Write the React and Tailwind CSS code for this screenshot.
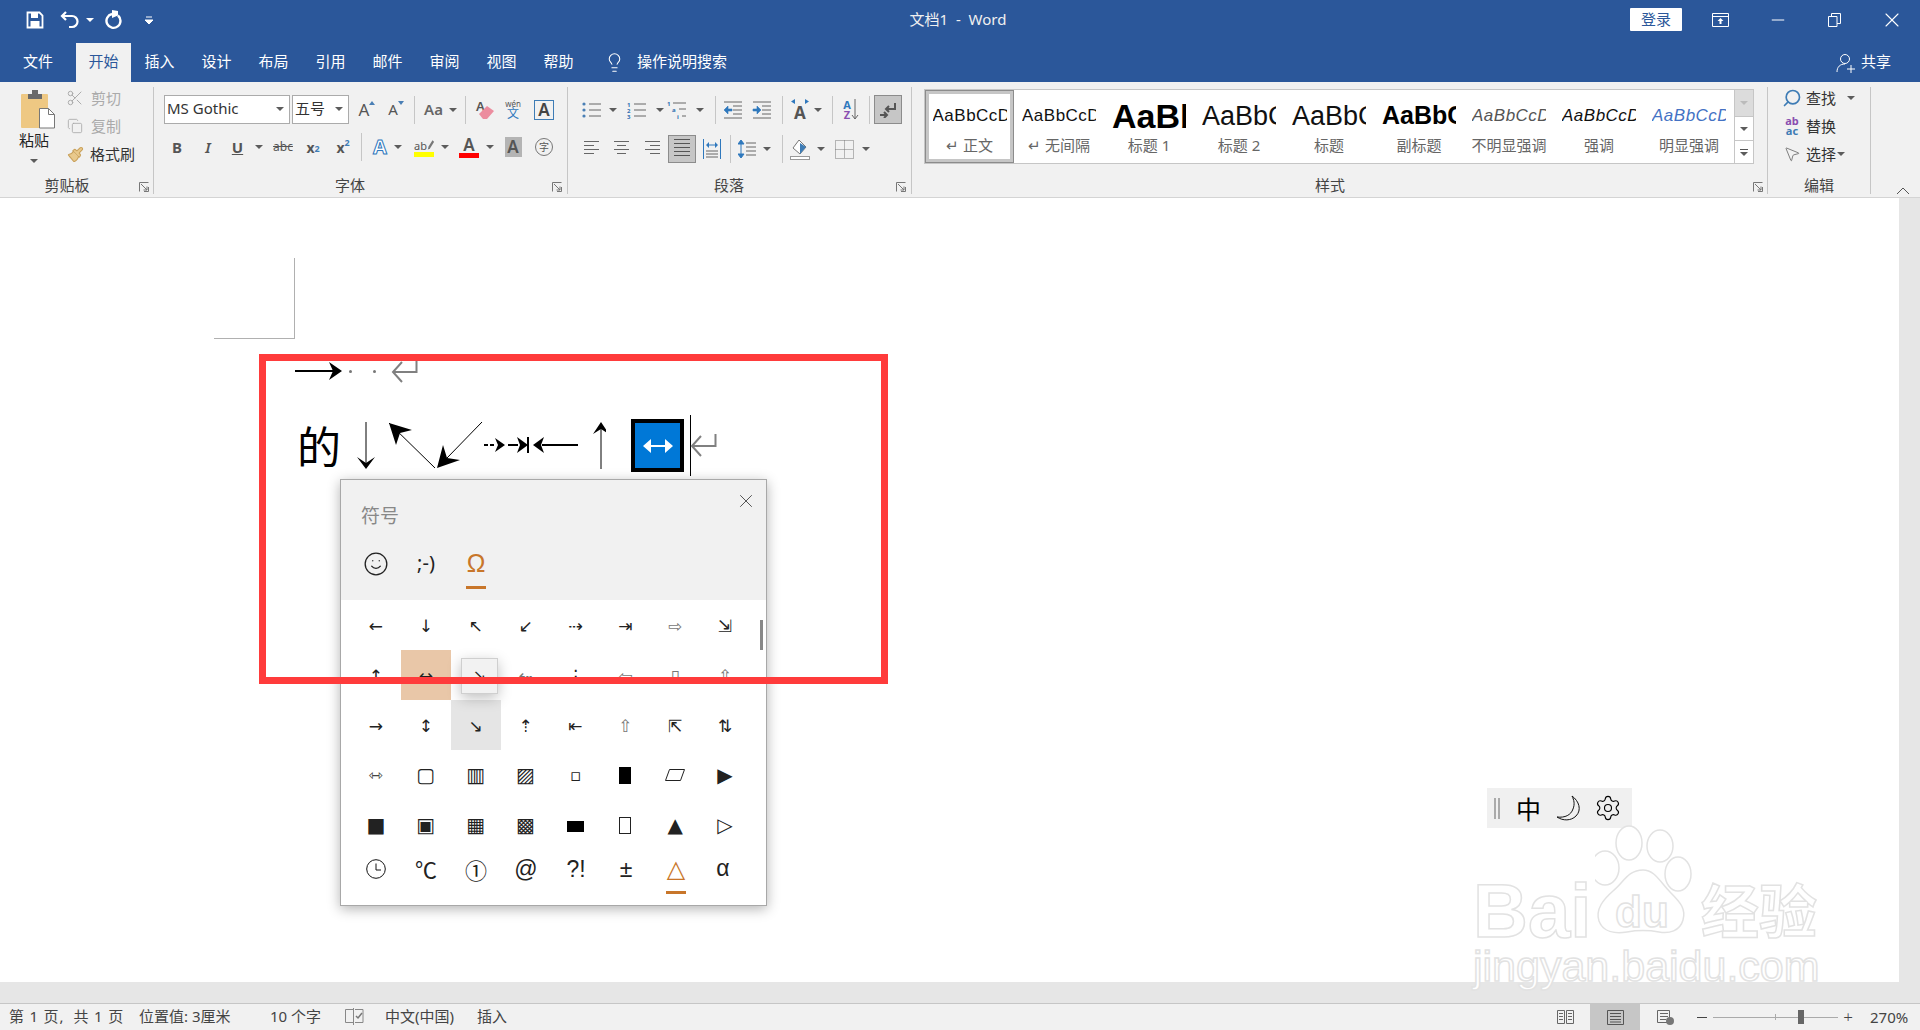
import React from "react";
import { Search, MousePointer2, Scissors, Copy, Paintbrush, Lightbulb, Settings, X, Minus, Smile } from "lucide-react";

const Caret = ({ color = "#5c5c5c" }) => (
  <svg width="8" height="4" viewBox="0 0 8 4" className="shrink-0">
    <path d="M0 0h8L4 4z" fill={color} />
  </svg>
);

const Slot = ({ className = "", children }) => (
  <div className={"flex items-center justify-center shrink-0 h-full " + className}>{children}</div>
);

const Sep = ({ className = "" }) => <div className={"w-px h-[28px] bg-[#c6c6c6] shrink-0 " + className} />;

const Launcher = () => (
  <svg width="10" height="10" viewBox="0 0 10 10">
    <path d="M.5 9.500v-9h9M2 2l6 6M8 4.500V8H4.500M9.500 5v4.500H5" fill="none" stroke="#777" />
  </svg>
);

const Group = ({ className = "", label, launcher, children }) => (
  <div className={"h-[107px] mt-[5px] border-r border-[#c6c6c6] flex flex-col shrink-0 " + className}>
    <div className="flex-1 min-h-0">{children}</div>
    <div className="flex h-[14px] items-center">
      <div className="flex-1 text-center text-[15px] leading-[14px] pb-[4px] text-[#444]">{label}</div>
      {launcher && <div className={"flex justify-center " + launcher}><Launcher /></div>}
    </div>
  </div>
);

const Lines = ({ rows, w = 16, color = "#666", aligns }) => (
  <svg width={w} height={rows * 4 + 1}>
    {Array.from({ length: rows }).map((_, i) => {
      const x = aligns ? aligns[i] : [0, 0];
      return <rect key={i} x={x[0]} y={i * 4} width={w - x[0] - x[1]} height="1" fill={color} />;
    })}
  </svg>
);

const Paste = () => (
  <svg width="36" height="40" viewBox="0 0 36 40">
    <rect x="1" y="5" width="27" height="34" rx="1" fill="#eec883" />
    <path d="M8 5h4V1h6v4h4v5H8z" fill="#6a6a6a" />
    <path d="M19.500 19.500h9l6 6v13.500h-15z" fill="#fff" stroke="#777" />
    <path d="M28.500 19.500v6h6" fill="none" stroke="#777" />
  </svg>
);

const Bullets = () => (
  <svg width="20" height="18" viewBox="0 0 20 18">
    <circle cx="2" cy="3" r="1.600" fill="#4a7fb5" />
    <circle cx="2" cy="9" r="1.600" fill="#4a7fb5" />
    <circle cx="2" cy="15" r="1.600" fill="#4a7fb5" />
    <path d="M7 3h12M7 9h12M7 15h12" stroke="#666" />
  </svg>
);

const Numbered = () => (
  <svg width="20" height="18" viewBox="0 0 20 18">
    <text x="0" y="6" fontSize="6" fontWeight="700" fill="#2f6fb0">1</text>
    <text x="0" y="12" fontSize="6" fontWeight="700" fill="#2f6fb0">2</text>
    <text x="0" y="18" fontSize="6" fontWeight="700" fill="#2f6fb0">3</text>
    <path d="M7 3h12M7 9h12M7 15h12" stroke="#666" />
  </svg>
);

const MultiLevel = () => (
  <svg width="20" height="20" viewBox="0 0 20 20">
    <text x="0" y="6" fontSize="6" fontWeight="700" fill="#2f6fb0">1</text>
    <text x="5" y="12" fontSize="6" fontWeight="700" fill="#2f6fb0">a</text>
    <text x="10" y="19" fontSize="6" fontWeight="700" fill="#2f6fb0">i</text>
    <path d="M6 3h13M12 9h7M15 16h4" stroke="#666" />
  </svg>
);

const Indent = ({ flip }) => (
  <svg width="20" height="18" viewBox="0 0 20 18">
    <path d="M1 1h18M10 5h9M10 9h9M10 13h9M1 17h18" stroke="#666" />
    {flip ? (
      <path d="M1 9l4-4v3h4v2H5v3z" fill="#2f78bd" stroke="#2f78bd" strokeWidth=".6" />
    ) : (
      <path d="M9 9L5 5v3H1v2h4v3z" fill="#2f78bd" stroke="#2f78bd" strokeWidth=".6" />
    )}
  </svg>
);

const Marks = () => (
  <svg width="18" height="16" viewBox="0 0 18 16">
    <path d="M16 1v6H7M10 4L7 7l3 3" fill="none" stroke="#555" strokeWidth="2" />
    <path d="M1 13h7M5 10l3 3-3 3" fill="none" stroke="#555" strokeWidth="2" />
  </svg>
);

const ReturnMark = ({ className = "" }) => (
  <svg width="27" height="23" viewBox="0 0 27 23" className={className}>
    <path d="M25.500 0v12H2M11 2L2 12l9 10" fill="none" stroke="#808080" strokeWidth="2" />
  </svg>
);

const styles = [
  { name: "↵ 正文", text: "AaBbCcDc", cls: "text-[17px] tracking-[.5px]" },
  { name: "↵ 无间隔", text: "AaBbCcDc", cls: "text-[17px] tracking-[.5px]" },
  { name: "标题 1", text: "AaBbCc", cls: "text-[34px] font-bold text-black" },
  { name: "标题 2", text: "AaBbCc", cls: "text-[27px]" },
  { name: "标题", text: "AaBbCc", cls: "text-[27px]" },
  { name: "副标题", text: "AaBbCc", cls: "text-[25px] font-bold text-black" },
  { name: "不明显强调", text: "AaBbCcDd", cls: "text-[17px] tracking-[.5px] italic text-[#555]" },
  { name: "强调", text: "AaBbCcDd", cls: "text-[17px] tracking-[.5px] italic" },
  { name: "明显强调", text: "AaBbCcDd", cls: "text-[17px] tracking-[.5px] italic text-[#4472c4]" },
];

const tabs = ["插入", "设计", "布局", "引用", "邮件", "审阅", "视图", "帮助"];

const G = "text-[#777] pt-[2px]";
const P = "pt-[2px]";
const Box = ({ className }) => <span className={"block shrink-0 " + className} />;
const symbolRows = [
  [["←", P], ["↓", P], ["↖", P], ["↙", P], ["⇢", P], ["⇥", P], ["⇨", G], ["⇲", P]],
  [["↑", P], ["↔", "bg-[#e9c7a8] " + P], [""], ["⇠", G], ["⋮", P], ["⇦", G], ["▯", G], ["⇧", G]],
  [["→", P], ["↕", P], ["↘", "bg-[#e5e5e5] " + P], ["⇡", P], ["⇤", P], ["⇧", G], ["⇱", P], ["⇅", P]],
  [
    ["⇿", "text-[#444]"], ["▢", "text-[20px]"], ["▥", "text-[20px]"], ["▨", "text-[20px]"], ["▫", "text-[12px]"],
    [<Box className="w-[12px] h-[17px] bg-black" />],
    [<svg width="20" height="12" viewBox="0 0 20 12"><path d="M4.500.5h15L15.500 11.500H.5z" fill="none" stroke="#222" /></svg>],
    ["▶", "text-[20px]"],
  ],
  [
    ["■", "text-[20px]"], ["▣", "text-[20px]"], ["▦", "text-[20px]"], ["▩", "text-[20px]"],
    [<Box className="w-[17px] h-[11px] bg-black mt-[2px]" />],
    [<Box className="w-[12px] h-[17px] border border-[#222]" />],
    ["▲", "text-[20px]"], ["▷", "text-[20px]"],
  ],
];

const SymbolPopup = () => (
  <div className="absolute left-[340px] top-[479px] w-[427px] h-[427px] bg-white border border-[#a8a8a8] shadow-[0_3px_12px_rgba(0,0,0,.3)]">
    <div className="h-[120px] bg-[#f1f1f1] relative">
      <div className="pl-[20px] pt-[23px] text-[19px] leading-[26px] text-[#888]">符号</div>
      <X size={22} strokeWidth={0.9} color="#333" className="absolute right-[9px] top-[10px]" />
      <div className="flex mt-[22px] pl-[10px] h-[40px]">
        <div className="w-[50px] flex justify-center">
          <Smile size={26} strokeWidth={1.2} color="#222" />
        </div>
        <div className="w-[50px] text-center text-[20px] leading-[24px] text-[#222]">;-)</div>
        <div className="w-[50px] flex flex-col items-center">
          <span className="text-[25px] leading-[24px] text-[#c8762a] font-['Liberation_Sans',sans-serif]">Ω</span>
          <span className="w-[20px] h-[3px] bg-[#c8762a] mt-[11px]" />
        </div>
      </div>
    </div>
    <div className="relative pl-[10px] pr-[16px] font-['DejaVu_Sans',sans-serif]">
      {symbolRows.map((row, r) => (
        <div key={r} className="flex">
          {row.map((s, c) => (
            <div key={c} className={"w-[50px] h-[50px] flex items-center justify-center text-[17px] leading-none text-[#222] " + (s[1] || "")}>
              {s[0]}
            </div>
          ))}
        </div>
      ))}
      <div className="flex h-[50px] text-[#222] font-['Liberation_Sans',sans-serif]">
        <div className="w-[50px] flex justify-center pt-[9px]">
          <svg width="20" height="20" viewBox="0 0 20 20">
            <circle cx="10" cy="10" r="9.300" fill="none" stroke="#111" />
            <path d="M10 4.500V11h5" fill="none" stroke="#111" />
          </svg>
        </div>
        <div className="w-[50px] text-center text-[22px] leading-[36px] font-['Noto_Sans_CJK_SC',sans-serif]">℃</div>
        <div className="w-[50px] text-center text-[22px] leading-[38px] font-['Noto_Sans_CJK_SC',sans-serif]">①</div>
        <div className="w-[50px] text-center text-[23px] leading-[38px]">@</div>
        <div className="w-[50px] text-center text-[23px] leading-[38px]">?!</div>
        <div className="w-[50px] text-center text-[23px] leading-[38px]">±</div>
        <div className="w-[50px] flex flex-col items-center">
          <span className="text-[24px] leading-[38px] text-[#c8762a] font-['DejaVu_Sans',sans-serif]">△</span>
          <span className="w-[20px] h-[3px] bg-[#c8762a] mt-[3px]" />
        </div>
        <div className="w-[50px] text-center text-[23px] leading-[36px] -ml-[3px]">α</div>
      </div>
      <div className="absolute right-[3px] top-[20px] w-[3px] h-[30px] bg-[#888]" />
      <div className="absolute left-[120px] top-[58px] w-[37px] h-[36px] bg-[#f2f2f2] border border-[#cfcfcf] shadow-[0_4px_14px_rgba(0,0,0,.25)] flex items-center justify-center text-[16px] text-[#222]">
        ↘
      </div>
    </div>
  </div>
);

const Watermark = () => (
  <div className="absolute left-[1473px] top-[824px] w-[346px] h-[166px] pointer-events-none flex flex-col text-white [-webkit-text-stroke:1.5px_#e2e2e2]">
    <div className="flex h-[114px] items-end font-['Liberation_Sans',sans-serif] font-bold">
      <span className="text-[76px] leading-[54px] w-[122px]">Bai</span>
      <div className="relative w-[98px] h-[114px] shrink-0">
        <svg width="98" height="114" viewBox="0 0 98 114">
          <g fill="#fff" stroke="#e2e2e2" strokeWidth="1.500">
            <ellipse cx="34" cy="19" rx="13" ry="17" />
            <ellipse cx="65" cy="22" rx="13" ry="16" />
            <ellipse cx="10" cy="44" rx="14" ry="17" />
            <ellipse cx="83" cy="50" rx="13" ry="17" />
            <path d="M48 46c12 0 17 12 27 22 11 11 16 17 13 28-3 11-14 14-24 12-11-2-21-2-32 0-12 2-24 0-28-11-4-12 5-22 14-30 11-9 15-21 30-21z" />
          </g>
        </svg>
        <span className="absolute left-[20px] bottom-[5px] text-[44px] leading-[42px]">du</span>
      </div>
      <span className="ml-[8px] text-[58px] leading-[60px] whitespace-nowrap font-['Noto_Sans_CJK_SC',sans-serif]">经验</span>
    </div>
    <div className="text-[43px] leading-[48px] mt-[4px] whitespace-nowrap font-['Liberation_Sans',sans-serif]">jingyan.baidu.com</div>
  </div>
);

export default function App() {
  return (
    <div className="relative w-[1920px] h-[1030px] overflow-hidden flex flex-col bg-white font-['Noto_Sans','Noto_Sans_CJK_SC',sans-serif]">
      {/* title bar */}
      <div className="h-[43px] bg-[#2b579a] flex text-white shrink-0">
        <div className="w-[860px] flex h-[40px] items-center pl-[26px]">
          <svg width="18" height="18" viewBox="0 0 18 18">
            <path d="M1.500 1.500h12l3 3v12h-15z" fill="none" stroke="#fff" strokeWidth="1.800" />
            <rect x="5" y="2" width="7" height="5" fill="#fff" />
            <rect x="4.500" y="10" width="9" height="6" fill="#fff" />
          </svg>
          <svg width="20" height="18" viewBox="0 0 20 18" className="ml-[16px]">
            <path d="M6 1L2 5l4 4M2.500 5H12a5 5 0 0 1 0 11H9" fill="none" stroke="#fff" strokeWidth="2.200" />
          </svg>
          <div className="ml-[6px]"><Caret color="#fff" /></div>
          <svg width="18" height="20" viewBox="0 0 18 20" className="ml-[11px]">
            <path d="M7 4a7 7 0 1 0 6 1.500" fill="none" stroke="#fff" strokeWidth="2.400" />
            <path d="M7 0v8l6-2.500V1z" fill="#fff" />
          </svg>
          <svg width="8" height="8" viewBox="0 0 8 8" className="ml-[22px]">
            <path d="M1 1h6M0 4h8L4 8z" stroke="#fff" fill="#fff" />
          </svg>
        </div>
        <div className="w-[196px] h-[40px] pb-[2px] flex items-center justify-center text-[15px] whitespace-pre text-[#f0f0f0]">文档1  -  Word</div>
        <div className="flex-1 flex justify-end">
          <div className="mt-[8px] mr-[9px] w-[52px] h-[23px] bg-white rounded-[1px] text-[#2b579a] text-[15px] leading-[22px] text-center">登录</div>
          <Slot className="w-[58px] !h-[40px]">
            <svg width="17" height="14" viewBox="0 0 17 14">
              <path d="M.5.500h16v13H.5zM.5 3.500h16" fill="none" stroke="#fff" />
              <path d="M8.500 5L5.500 8h2v3h2V8h2z" fill="#fff" />
            </svg>
          </Slot>
          <Slot className="w-[57px] !h-[40px]"><Minus size={20} strokeWidth={1.2} /></Slot>
          <Slot className="w-[57px] !h-[40px]">
            <svg width="13" height="14" viewBox="0 0 13 14">
              <path d="M.5 3.500h8.500v10H.5zM3.500 3.500v-3h9v10H9" fill="none" stroke="#fff" />
            </svg>
          </Slot>
          <Slot className="w-[57px] !h-[40px]"><X size={24} strokeWidth={1.1} /></Slot>
        </div>
      </div>

      {/* tabs */}
      <div className="h-[39px] bg-[#2b579a] flex text-white text-[15px] shrink-0">
        <div className="w-[76px] leading-[37px] text-center">文件</div>
        <div className="w-[55px] leading-[37px] text-center bg-[#f1f1f1] text-[#2b579a]">开始</div>
        {tabs.map((t) => (
          <div key={t} className="w-[57px] leading-[37px] text-center">{t}</div>
        ))}
        <Slot className="ml-[14px] w-[26px]"><Lightbulb size={21} strokeWidth={1.2} /></Slot>
        <div className="ml-[10px] leading-[37px]">操作说明搜索</div>
        <div className="flex-1 flex justify-end items-center pr-[29px] pb-[2px]">
          <svg width="20" height="20" viewBox="0 0 20 20" className="mr-[5px] mt-[2px]">
            <circle cx="9" cy="6" r="4.500" fill="none" stroke="#fff" />
            <path d="M1 19c0-5 3-8 8-8M11 16h8M15 12v8" fill="none" stroke="#fff" />
          </svg>
          共享
        </div>
      </div>

      {/* ribbon */}
      <div className="h-[116px] bg-[#f1f1f1] border-b border-[#d4d4d4] flex shrink-0 text-[#444]">
        <Group className="w-[154px]" label="剪贴板" launcher="w-[19px]">
          <div className="flex">
            <div className="w-[63px] flex flex-col items-center pt-[2px] pl-[13px]">
              <Paste />
              <div className="text-[15px] leading-[16px] mt-[3px] -ml-[8px] text-[#222]">粘贴</div>
              <div className="mt-[11px] -ml-[8px]"><Caret /></div>
            </div>
            <div className="flex flex-col gap-[4px] text-[15px] -mt-[1px]">
              <div className="h-[24px] flex items-center text-[#aaa]">
                <Slot className="w-[24px]"><Scissors size={18} strokeWidth={1.3} /></Slot>
                <span className="ml-[4px]">剪切</span>
              </div>
              <div className="h-[24px] flex items-center text-[#aaa]">
                <Slot className="w-[24px]"><Copy size={16} strokeWidth={1.3} /></Slot>
                <span className="ml-[4px]">复制</span>
              </div>
              <div className="h-[24px] flex items-center text-[#333]">
                <Slot className="w-[24px]"><Paintbrush size={17} strokeWidth={1.5} color="#c9a15b" fill="#e9c98c" /></Slot>
                <span className="ml-[3px]">格式刷</span>
              </div>
            </div>
          </div>
        </Group>

        <Group className="w-[414px]" label="字体" launcher="w-[21px]">
          <div className="h-[29px] mt-[8px] flex pl-[10px] items-center">
            <div className="w-[126px] h-[29px] pb-[2px] bg-white border border-[#ababab] flex items-center justify-between pl-[2px] pr-[5px] text-[15px] text-[#333]">
              MS Gothic<Caret />
            </div>
            <div className="w-[57px] h-[29px] pb-[2px] ml-[2px] bg-white border border-[#ababab] flex items-center justify-between pl-[2px] pr-[5px] text-[15px] text-[#333]">
              五号<Caret />
            </div>
            <Slot className="w-[28px] ml-[4px] text-[17px] text-[#555]">
              A<svg width="6" height="4" viewBox="0 0 6 4" className="-mt-[14px]"><path d="M3 0l3 4H0z" fill="#4a7fb5" /></svg>
            </Slot>
            <Slot className="w-[30px] text-[15px] text-[#555]">
              A<svg width="6" height="4" viewBox="0 0 6 4" className="-mt-[14px]"><path d="M3 4l3-4H0z" fill="#4a7fb5" /></svg>
            </Slot>
            <Sep className="ml-[3px]" />
            <Slot className="w-[50px] gap-[6px] pl-[1px] text-[15px] font-semibold text-[#666]">Aa<Caret /></Slot>
            <Sep />
            <Slot className="w-[38px]">
              <svg width="20" height="21" viewBox="0 0 20 21">
                <text x="1" y="12" fontSize="13" fontWeight="600" fill="#555">A</text>
                <path d="M4 15l8-8 7 5-7 8H8z" fill="#ec8d9f" />
              </svg>
            </Slot>
            <Slot className="w-[18px] flex-col leading-none">
              <span className="text-[8px] text-[#555]">wén</span>
              <span className="text-[12px] text-[#2f78bd]">文</span>
            </Slot>
            <Slot className="w-[44px]">
              <div className="w-[20px] h-[20px] border border-[#3e7cb5] text-[17px] leading-[18px] font-semibold text-center text-[#444]">A</div>
            </Slot>
          </div>
          <div className="h-[28px] mt-[9px] flex pl-[8px] items-center text-[#555]">
            <Slot className="w-[30px] font-bold text-[15px]">B</Slot>
            <Slot className="w-[32px] italic font-semibold text-[15px]">I</Slot>
            <Slot className="w-[27px] font-bold text-[15px] underline">U</Slot>
            <Slot className="w-[16px]"><Caret /></Slot>
            <Slot className="w-[32px] text-[12px] line-through">abc</Slot>
            <Slot className="w-[28px] font-bold text-[14px]">x<sub className="text-[9px] text-[#3e7cb5]">2</sub></Slot>
            <Slot className="w-[32px] font-bold text-[14px]">x<sup className="text-[9px] text-[#3e7cb5]">2</sup></Slot>
            <Sep className="ml-[2px]" />
            <Slot className="w-[28px] ml-[4px] text-[20px] font-bold text-white [-webkit-text-stroke:1px_#2f78bd]">A</Slot>
            <Slot className="w-[8px]"><Caret /></Slot>
            <Slot className="w-[36px] ml-[4px] flex-col">
              <span className="flex items-end h-[15px] w-[20px] justify-between">
                <span className="text-[11px] leading-[12px]">ab</span>
                <svg width="9" height="14" viewBox="0 0 9 14"><path d="M7 1L2 9l-1 4 3-2 5-8z" fill="#777" /></svg>
              </span>
              <span className="w-[20px] h-[5px] bg-[#ffff00]" />
            </Slot>
            <Slot className="w-[6px]"><Caret /></Slot>
            <Slot className="w-[34px] ml-[4px] flex-col">
              <span className="text-[17px] leading-[17px] font-semibold">A</span>
              <span className="w-[20px] h-[5px] bg-[#ff0000]" />
            </Slot>
            <Slot className="w-[8px]"><Caret /></Slot>
            <Slot className="w-[38px]">
              <div className="w-[17px] h-[20px] bg-[#b4b4b4] text-[17px] leading-[20px] font-semibold text-center">A</div>
            </Slot>
            <Slot className="w-[24px]">
              <div className="w-[18px] h-[18px] rounded-full border border-[#777] text-[10px] leading-[16px] text-center">字</div>
            </Slot>
          </div>
        </Group>

        <Group className="w-[344px]" label="段落" launcher="w-[21px]">
          <div className="h-[29px] mt-[8px] flex items-center">
            <Slot className="w-[28px] ml-[10px]"><Bullets /></Slot>
            <Slot className="w-[14px]"><Caret /></Slot>
            <Slot className="w-[34px]"><Numbered /></Slot>
            <Slot className="w-[12px]"><Caret /></Slot>
            <Slot className="w-[22px]"><MultiLevel /></Slot>
            <Slot className="w-[24px]"><Caret /></Slot>
            <Sep className="ml-[3px]" />
            <Slot className="w-[34px]"><Indent flip /></Slot>
            <Slot className="w-[24px]"><Indent /></Slot>
            <Sep className="ml-[8px]" />
            <Slot className="w-[26px] ml-[4px] text-[17px] font-bold text-[#555] flex-col leading-none">
              <svg width="20" height="5" viewBox="0 0 20 5"><path d="M5 0L1 2.500 5 5zM15 0l4 2.500-4 2.500z" fill="#2f78bd" /></svg>
              A
            </Slot>
            <Slot className="w-[10px]"><Caret /></Slot>
            <Sep className="ml-[9px]" />
            <Slot className="w-[36px] text-[11px] font-bold leading-[10px]">
              <div className="flex flex-col items-center">
                <span className="text-[#2f78bd]">A</span>
                <span className="text-[#8a4fb0]">Z</span>
              </div>
              <svg width="8" height="21" viewBox="0 0 8 21"><path d="M4 0v20M1 16l3 4 3-4" fill="none" stroke="#666" /></svg>
            </Slot>
            <Sep />
            <Slot className="w-[28px] ml-[4px] bg-[#c6c6c6] border border-[#8c8c8c]"><Marks /></Slot>
          </div>
          <div className="h-[28px] mt-[11px] flex items-center">
            <Slot className="w-[28px] ml-[9px]"><Lines rows={4} w={15} aligns={[[0, 0], [0, 5], [0, 0], [0, 5]]} /></Slot>
            <Slot className="w-[32px]"><Lines rows={4} w={15} aligns={[[0, 0], [3, 3], [0, 0], [3, 3]]} /></Slot>
            <Slot className="w-[30px]"><Lines rows={4} w={15} aligns={[[0, 0], [5, 0], [0, 0], [5, 0]]} /></Slot>
            <Slot className="w-[28px] ml-[1px] bg-[#c6c6c6] border border-[#8c8c8c]"><Lines rows={5} w={16} color="#555" /></Slot>
            <Slot className="w-[32px]">
              <svg width="18" height="20" viewBox="0 0 18 20">
                <path d="M.5 0v20M17.500 0v20M5 6h8" stroke="#2f78bd" fill="none" />
                <path d="M3 6l3-3v6zM15 6l-3-3v6z" fill="#2f78bd" />
                <path d="M3 12h12M3 15h12M3 18h12" stroke="#666" />
              </svg>
            </Slot>
            <Sep className="ml-[2px]" />
            <Slot className="w-[32px]">
              <svg width="18" height="20" viewBox="0 0 18 20">
                <path d="M3 2v16M0 5l3-4 3 4zM0 15l3 4 3-4z" fill="#2f78bd" stroke="#2f78bd" />
                <path d="M8 4h10M8 8h10M8 12h10M8 16h10" stroke="#666" />
              </svg>
            </Slot>
            <Slot className="w-[8px]"><Caret /></Slot>
            <Sep className="ml-[11px]" />
            <Slot className="w-[34px]">
              <svg width="20" height="21" viewBox="0 0 20 21">
                <path d="M9 1l7 7-6 7-7-6z" fill="#fff" stroke="#777" />
                <path d="M10 4l6 4-6 7z" fill="#3e7cb5" />
                <rect x=".5" y="17.500" width="19" height="3" fill="#fff" stroke="#999" />
              </svg>
            </Slot>
            <Slot className="w-[8px]"><Caret /></Slot>
            <Slot className="w-[32px] ml-[3px]">
              <svg width="19" height="19" viewBox="0 0 19 19">
                <path d="M.5.500h18v18H.5zM9.500.5v18M.5 9.500h18" fill="none" stroke="#777" strokeDasharray="1 1" />
              </svg>
            </Slot>
            <Slot className="w-[8px] ml-[2px]"><Caret /></Slot>
          </div>
        </Group>

        <Group className="w-[856px]" label="样式" launcher="w-[19px]">
          <div className="ml-[12px] mt-[2px] w-[830px] h-[75px] bg-white border border-[#c6c6c6] flex">
            {styles.map((s, i) => (
              <div
                key={s.name}
                className={
                  "w-[90px] h-full flex flex-col items-center shrink-0 " +
                  (i === 0 ? "!w-[89px] border-[4px] border-[#c6c6c6] outline outline-1 outline-[#8c8c8c] -outline-offset-1" : "")
                }
              >
                <div className={"w-[74px] overflow-hidden whitespace-nowrap flex items-center text-[#111] font-['Liberation_Sans',sans-serif] " + (i === 0 ? "h-[40px] mt-[2px]" : "h-[40px] mt-[6px]") + " " + s.cls}>
                  {s.text}
                </div>
                <div className="text-[15px] leading-[18px] text-[#666] whitespace-nowrap">{s.name}</div>
              </div>
            ))}
            <div className="flex-1 flex flex-col border-l border-[#c6c6c6]">
              <div className="h-[26px] bg-[#dcdcdc] flex items-center justify-center"><Caret color="#bbb" /></div>
              <div className="h-[24px] border-t border-[#c6c6c6] flex items-center justify-center"><Caret /></div>
              <div className="flex-1 border-t border-[#c6c6c6] flex flex-col items-center justify-center gap-[2px]">
                <span className="w-[8px] h-px bg-[#555]" />
                <Caret />
              </div>
            </div>
          </div>
        </Group>

        <Group className="w-[103px]" label="编辑">
          <div className="flex flex-col gap-[4px] text-[15px] text-[#333] -mt-[1px]">
            <div className="h-[24px] flex items-center pl-[13px]">
              <Slot className="w-[22px] -scale-x-100"><Search size={20} strokeWidth={2} color="#3e7cb5" /></Slot>
              <span className="ml-[3px]">查找</span>
              <div className="ml-[11px]"><Caret /></div>
            </div>
            <div className="h-[24px] flex items-center pl-[13px]">
              <Slot className="w-[22px] flex-col text-[11px] leading-[10px] font-bold">
                <span className="text-[#8a4fb0]">ab</span>
                <span className="text-[#3e7cb5]">ac</span>
              </Slot>
              <span className="ml-[3px]">替换</span>
            </div>
            <div className="h-[24px] flex items-center pl-[13px]">
              <Slot className="w-[22px]"><MousePointer2 size={18} strokeWidth={1.1} color="#666" /></Slot>
              <span className="ml-[3px]">选择</span>
              <div className="ml-[1px]"><Caret /></div>
            </div>
          </div>
        </Group>

        <div className="flex-1 flex items-end justify-end pr-[10px] pb-[2px]">
          <svg width="14" height="8" viewBox="0 0 14 8"><path d="M1 7l6-6 6 6" fill="none" stroke="#555" /></svg>
        </div>
      </div>

      {/* document */}
      <div className="flex-1 min-h-0 flex flex-col">
        <div className="flex-1 min-h-0 flex">
          <div className="flex-1 bg-white">
            <div className="ml-[214px] mt-[60px] w-[81px] h-[81px] border-r border-b border-[#b0b0b0]" />
            <div className="ml-[295px] mt-[20px] h-[24px] flex items-center">
              <svg width="48" height="22" viewBox="0 0 48 22">
                <path d="M0 11h40" stroke="#000" strokeWidth="2" />
                <path d="M47 11L34 2l4 9-4 9z" fill="#000" />
              </svg>
              <span className="ml-[6px] w-[3px] h-[3px] bg-[#777] rounded-full" />
              <span className="ml-[21px] w-[3px] h-[3px] bg-[#777] rounded-full" />
              <ReturnMark className="ml-[15px]" />
            </div>
            <div className="ml-[297px] mt-[32px] h-[61px] flex">
              <div className="w-[45px] text-[44px] leading-[61px] text-black font-['Noto_Sans_CJK_SC',sans-serif] whitespace-nowrap">的</div>
              <svg width="264" height="61" viewBox="0 0 264 61" className="shrink-0 -mb-px">
                <path d="M24 7v44M47 8l46 45M140 7L105 43" fill="none" stroke="#000" />
                <path d="M15 42l9 12 9-12-9 6zM47 8l23 7-12 3-4 12zM95 53l6-23 4 13 13 2z" fill="#000" />
                <path d="M142 30h12" stroke="#000" strokeWidth="2" strokeDasharray="4 2" />
                <path d="M163 30l-10-7 3 7-3 7zM186 30l-11-8 3 8-3 8z" fill="#000" />
                <path d="M166 30h10M186 22v16M200 30h36" stroke="#000" strokeWidth="2" fill="none" />
                <path d="M191 30l11-8-3 8 3 8z" fill="#000" />
                <path d="M259 9v45" stroke="#000" />
                <path d="M259 7l-8 12 8-5 8 5z" fill="#000" />
              </svg>
              <div className="ml-[25px] mt-[4px] w-[53px] h-[53px] border-[4px] border-black bg-[#0078d7] flex items-center justify-center shrink-0">
                <svg width="30" height="14" viewBox="0 0 30 14">
                  <path d="M6 7h18" stroke="#fff" strokeWidth="2" />
                  <path d="M0 7l8-7v14zM30 7l-8-7v14z" fill="#fff" />
                </svg>
              </div>
              <div className="ml-[6px] w-px h-[61px] bg-black shrink-0" />
              <ReturnMark className="mt-[19px] -ml-[1px]" />
            </div>
          </div>
          <div className="w-[21px] bg-[#e6e6e6]" />
        </div>
        <div className="h-[21px] bg-[#e6e6e6]" />
      </div>

      {/* status bar */}
      <div className="h-[27px] pb-[2px] bg-[#f1f1f1] border-t border-[#c6c6c6] flex items-center text-[15px] text-[#444] shrink-0">
        <div className="w-[139px] pl-[9px] whitespace-pre tracking-[.8px]">第 1 页,  共 1 页</div>
        <div className="w-[131px] whitespace-nowrap">位置值: 3厘米</div>
        <div className="w-[75px] whitespace-nowrap">10 个字</div>
        <div className="w-[40px]">
          <svg width="19" height="17" viewBox="0 0 19 17">
            <path d="M.5 1.500H8M.5 1.500v13H8M8.500 0v17M10 1.500h8v13h-8" fill="none" stroke="#888" />
            <path d="M11 8l2 2 4-5" fill="none" stroke="#777" strokeWidth="1.500" />
          </svg>
        </div>
        <div className="w-[92px] whitespace-nowrap">中文(中国)</div>
        <div>插入</div>
        <div className="ml-auto flex h-[26px] -mb-[2px] items-center">
          <Slot className="w-[50px]">
            <svg width="17" height="14" viewBox="0 0 17 14">
              <path d="M.5.500h7v13h-7zM9.500.5h7v13h-7zM2 3.500h4M2 6.500h4M2 9.500h4M11 3.500h4M11 6.500h4M11 9.500h4" fill="none" stroke="#666" />
            </svg>
          </Slot>
          <Slot className="w-[50px] bg-[#c6c6c6]">
            <svg width="17" height="15" viewBox="0 0 17 15">
              <path d="M.5.500h16v14H.5zM3 3.500h11M3 6.500h11M3 9.500h11M3 12h11" fill="none" stroke="#555" />
            </svg>
          </Slot>
          <Slot className="w-[50px]">
            <svg width="17" height="15" viewBox="0 0 17 15">
              <path d="M.5.500h12v12H.5zM3 3.500h8M3 6.500h8M3 9.500h6" fill="none" stroke="#666" />
              <circle cx="13" cy="11" r="4" fill="#777" />
            </svg>
          </Slot>
          <Slot className="w-[23px]"><span className="w-[10px] h-px bg-[#444]" /></Slot>
          <div className="relative w-[125px] h-full flex items-center">
            <div className="w-full h-px bg-[#aaa]" />
            <div className="absolute left-[62px] top-[10px] w-px h-[6px] bg-[#aaa]" />
            <div className="absolute left-[85px] top-[6px] w-[6px] h-[14px] bg-[#666]" />
          </div>
          <Slot className="w-[20px] text-[17px] font-light">+</Slot>
          <div className="w-[62px] pl-[12px] text-[15px]">270%</div>
        </div>
      </div>

      {/* overlays */}
      <SymbolPopup />
      <div className="absolute left-[259px] top-[354px] w-[629px] h-[330px] border-[7px] border-[#ff3b3b] pointer-events-none" />
      <div className="absolute left-[1487px] top-[788px] w-[145px] h-[40px] bg-[#f0f0f0] flex items-center pl-[7px] text-black">
        <span className="w-[6px] h-[21px] border-x-2 border-[#aaa] border-y-0" />
        <span className="ml-[16px] text-[25px] leading-none w-[25px] font-['Noto_Sans_CJK_SC',sans-serif]">中</span>
        <svg width="26" height="26" viewBox="0 0 26 26" className="ml-[14px]">
          <path d="M17 1c7 5 10 14 4 20-5 5-13 5-19 1 8 1 14-2 16-8 2-5 1-9-1-13z" fill="none" stroke="#111" />
        </svg>
        <Settings size={28} strokeWidth={0.95} className="ml-[13px]" />
      </div>
      <Watermark />
    </div>
  );
}
